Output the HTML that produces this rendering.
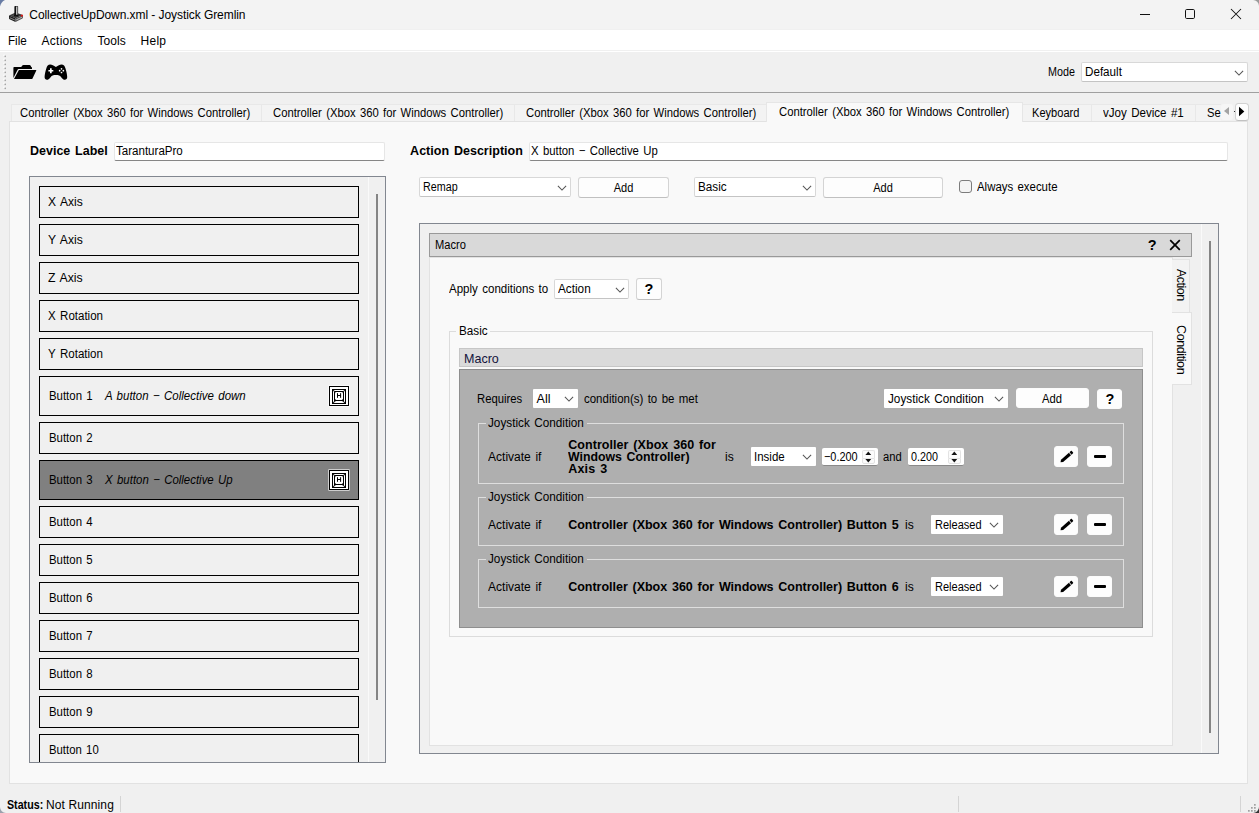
<!DOCTYPE html>
<html>
<head>
<meta charset="utf-8">
<title>Joystick Gremlin</title>
<style>
html,body{margin:0;padding:0;overflow:hidden;}
body{width:1259px;height:813px;overflow:hidden;position:relative;background:#f0f0f0;font-family:"Liberation Sans",sans-serif;font-size:12.5px;color:#000;}
.a{position:absolute;box-sizing:border-box;}
.t{position:absolute;white-space:nowrap;line-height:14px;height:14px;}
.b{font-weight:bold;}
.i{font-style:italic;}
.combo{position:absolute;box-sizing:border-box;background:#fff;border:1px solid #d8d8d8;border-bottom-color:#c4c4c4;border-radius:2px;}
.btn{position:absolute;box-sizing:border-box;background:#fdfdfd;border:1px solid #d4d4d4;border-bottom-color:#c0c0c0;border-radius:3px;}
.item{position:absolute;box-sizing:border-box;border:1px solid #000;background:#f0f0f0;}
.edit{position:absolute;box-sizing:border-box;background:#fff;border:1px solid #e6e6e6;border-bottom:1px solid #868686;border-radius:2px;}
</style>
</head>
<body>
<div class="a" style="left:0px;top:0px;width:1259px;height:30px;background:#f3f3f3;"></div>
<svg class="a" style="left:0;top:0" width="10" height="10" viewBox="0 0 10 10"><path d="M0 0 H5 Q1.2 1.6 0 6.6 Z" fill="#687ca4"/></svg>
<svg class="a" style="left:1249px;top:803px" width="10" height="10" viewBox="0 0 10 10"><path d="M10 10 V4 A6 6 0 0 1 4 10 Z" fill="#333"/></svg>
<svg class="a" style="left:0px;top:805px" width="8" height="8" viewBox="0 0 8 8"><path d="M0 8 V2 A6 6 0 0 0 6 8 Z" fill="#9aa0ac"/></svg>
<svg class="a" style="left:1251px;top:0" width="8" height="8" viewBox="0 0 8 8"><path d="M8 0 H2 A6 6 0 0 1 8 6 Z" fill="#9a9a9a"/></svg>
<svg class="a" style="left:8px;top:5px" width="16" height="18" viewBox="0 0 16 18">
<path d="M1 10.5 L7.5 7.6 L15 10 L7.5 13.3 Z" fill="#3a3a3a"/>
<path d="M1 10.5 L7.5 13.3 L7.5 16.9 L1.6 14.2 Q1 13.9 1 13.2 Z" fill="#1c1c1c"/>
<path d="M7.5 13.3 L15 10 L15 12.6 Q15 13.3 14.4 13.6 L7.5 16.9 Z" fill="#4e4e4e"/>
<path d="M1.8 12.2 L6.8 14.4 L6.8 15.4 L1.8 13.2 Z" fill="#8c8c8c"/>
<path d="M8.3 14.3 L14.3 11.6 L14.3 12.6 L8.3 15.4 Z" fill="#b4b4b4"/>
<path d="M3.5 10.6 L7.2 9 L11 10.4 L7.4 12.1 Z" fill="#555"/>
<ellipse cx="8.2" cy="10.4" rx="2.4" ry="1.2" fill="#111"/>
<rect x="6.4" y="0.9" width="3.7" height="9.8" rx="0.9" fill="#111"/>
<rect x="8.2" y="1.5" width="1.2" height="8.2" fill="#e6e6e6"/>
<rect x="12.8" y="9.7" width="2.1" height="1.7" rx="0.3" fill="#e31414"/>
</svg>
<div class="t " style="top:8.14px;letter-spacing:-0.065px;left:29.30px;font-size:12px;">CollectiveUpDown.xml - Joystick Gremlin</div>
<svg class="a" style="left:1130px;top:0" width="129" height="30" viewBox="0 0 129 30"><path d="M10 14.5 H20" stroke="#111" stroke-width="1" fill="none"/><rect x="55.5" y="9.5" width="9" height="9" rx="1.2" fill="none" stroke="#111" stroke-width="1"/><path d="M101 9 L111 19 M111 9 L101 19" stroke="#111" stroke-width="1.05" fill="none"/></svg>
<div class="a" style="left:0px;top:30px;width:1259px;height:20px;background:#fff;"></div>
<div class="a" style="left:0px;top:29px;width:1259px;height:1px;background:#f0f0f0;"></div>
<div class="t " style="top:34.14px;left:7.70px;transform:scaleX(0.9719);transform-origin:0 0;font-size:12px;">File</div>
<div class="t " style="top:34.14px;letter-spacing:0.237px;left:41.60px;font-size:12px;">Actions</div>
<div class="t " style="top:34.14px;letter-spacing:0.041px;left:97.50px;font-size:12px;">Tools</div>
<div class="t " style="top:34.14px;letter-spacing:0.289px;left:140.50px;font-size:12px;">Help</div>
<div class="a" style="left:0px;top:51px;width:1259px;height:42px;background:#f0f0f0;border-bottom:1px solid #a0a0a0;border-top:1px solid #fff;"></div>
<svg class="a" style="left:3px;top:54px" width="4" height="36" viewBox="0 0 4 36"><rect x="0.4" y="0.6" width="1.5" height="1.5" fill="#fff"/><rect x="1.5" y="1.6" width="1.5" height="1.5" fill="#a6a6a6"/><rect x="0.4" y="4.6" width="1.5" height="1.5" fill="#fff"/><rect x="1.5" y="5.6" width="1.5" height="1.5" fill="#a6a6a6"/><rect x="0.4" y="8.6" width="1.5" height="1.5" fill="#fff"/><rect x="1.5" y="9.6" width="1.5" height="1.5" fill="#a6a6a6"/><rect x="0.4" y="12.6" width="1.5" height="1.5" fill="#fff"/><rect x="1.5" y="13.6" width="1.5" height="1.5" fill="#a6a6a6"/><rect x="0.4" y="16.6" width="1.5" height="1.5" fill="#fff"/><rect x="1.5" y="17.6" width="1.5" height="1.5" fill="#a6a6a6"/><rect x="0.4" y="20.6" width="1.5" height="1.5" fill="#fff"/><rect x="1.5" y="21.6" width="1.5" height="1.5" fill="#a6a6a6"/><rect x="0.4" y="24.6" width="1.5" height="1.5" fill="#fff"/><rect x="1.5" y="25.6" width="1.5" height="1.5" fill="#a6a6a6"/><rect x="0.4" y="28.6" width="1.5" height="1.5" fill="#fff"/><rect x="1.5" y="29.6" width="1.5" height="1.5" fill="#a6a6a6"/><rect x="0.4" y="32.6" width="1.5" height="1.5" fill="#fff"/><rect x="1.5" y="33.6" width="1.5" height="1.5" fill="#a6a6a6"/></svg>
<svg class="a" style="left:13px;top:64px" width="24" height="16" viewBox="0 0 24 16">
<path d="M0.4 3.8 Q0.4 3.1 1.1 3.1 L8.2 3.1 L9.6 1.3 Q9.9 0.9 10.5 0.9 L16.6 0.9 Q17.2 0.9 17.5 1.4 L18.3 3.1 Q19 3.2 19 3.9 L19 5.1 L5.6 5.1 Q4.9 5.1 4.6 5.8 L0.4 14 Z" fill="#000"/>
<path d="M5.9 6 L23 6 Q23.6 6 23.3 6.6 L19.5 14.4 Q19.2 14.9 18.6 14.9 L1 14.9 Z" fill="#000"/>
</svg>
<svg class="a" style="left:44px;top:64px" width="24" height="16" viewBox="0 0 24 16">
<path d="M6.2 0.6 C8 0.6 9.6 1.8 11.9 3 C14.2 1.8 15.8 0.6 17.4 0.6 C19.7 0.6 20.8 2.2 21.5 4.6 C22.4 7.6 23.2 11 23.2 13 C23.2 14.8 22.2 15.8 20.9 15.8 C19.4 15.8 18.4 14.6 17 12.9 C16 11.6 14.6 11 11.9 11 C9.2 11 7.8 11.6 6.8 12.9 C5.4 14.6 4.4 15.8 2.9 15.8 C1.6 15.8 0.6 14.8 0.6 13 C0.6 11 1.4 7.6 2.3 4.6 C3 2.2 4.1 0.6 6.2 0.6 Z" fill="#000"/>
<path d="M6 4.3 h1.7 v1.6 h1.6 v1.7 h-1.6 v1.6 h-1.7 v-1.6 h-1.6 v-1.7 h1.6 Z" fill="#fff"/>
<circle cx="17.5" cy="4.8" r="0.85" fill="#fff"/><circle cx="17.5" cy="8.5" r="0.85" fill="#fff"/><circle cx="15.65" cy="6.65" r="0.85" fill="#fff"/><circle cx="19.35" cy="6.65" r="0.85" fill="#fff"/>
</svg>
<div class="t " style="top:64.97px;left:1047.90px;transform:scaleX(0.8599);transform-origin:0 0;">Mode</div>
<div class="combo" style="left:1081px;top:62px;width:167px;height:20px;"></div>
<div class="t " style="top:64.97px;left:1084.90px;transform:scaleX(0.9316);transform-origin:0 0;">Default</div>
<svg class="a" style="left:1233.5px;top:69.8px" width="10" height="6" viewBox="0 0 10 6"><path d="M0.9 0.8 L5 5 L9.1 0.8" fill="none" stroke="#555" stroke-width="1.05"/></svg>
<div class="a" style="left:9px;top:121px;width:1239px;height:663px;background:#f9f9f9;border:1px solid #e2e2e2;"></div>
<div class="a" style="left:11px;top:104px;width:251px;height:17px;background:#f3f3f3;border:1px solid #e8e8e8;border-bottom:none;border-left:none;"></div>
<div class="a" style="left:262px;top:104px;width:253px;height:17px;background:#f3f3f3;border:1px solid #e8e8e8;border-bottom:none;border-left:none;"></div>
<div class="a" style="left:515px;top:104px;width:253px;height:17px;background:#f3f3f3;border:1px solid #e8e8e8;border-bottom:none;border-left:none;"></div>
<div class="a" style="left:1023px;top:104px;width:69px;height:17px;background:#f3f3f3;border:1px solid #e8e8e8;border-bottom:none;border-left:none;"></div>
<div class="a" style="left:1092px;top:104px;width:104px;height:17px;background:#f3f3f3;border:1px solid #e8e8e8;border-bottom:none;border-left:none;"></div>
<div class="a" style="left:1196px;top:104px;width:54px;height:17px;background:#f3f3f3;border:1px solid #e8e8e8;border-bottom:none;border-left:none;"></div>
<div class="a" style="left:11px;top:104px;width:1px;height:17px;background:#e8e8e8;"></div>
<div class="a" style="left:766px;top:102px;width:257px;height:20px;background:#f9f9f9;border:1px solid #e6e6e6;border-bottom:none;"></div>
<div class="t " style="top:105.97px;word-spacing:1.3px;left:19.60px;transform:scaleX(0.9020);transform-origin:0 0;">Controller (Xbox 360 for Windows Controller)</div>
<div class="t " style="top:105.97px;word-spacing:1.3px;left:272.60px;transform:scaleX(0.9020);transform-origin:0 0;">Controller (Xbox 360 for Windows Controller)</div>
<div class="t " style="top:105.97px;word-spacing:1.3px;left:525.60px;transform:scaleX(0.9020);transform-origin:0 0;">Controller (Xbox 360 for Windows Controller)</div>
<div class="t " style="top:104.97px;word-spacing:1.3px;left:778.60px;transform:scaleX(0.9020);transform-origin:0 0;">Controller (Xbox 360 for Windows Controller)</div>
<div class="t " style="top:105.97px;left:1032.30px;transform:scaleX(0.8857);transform-origin:0 0;">Keyboard</div>
<div class="t " style="top:105.97px;word-spacing:1.3px;left:1103.10px;transform:scaleX(0.9248);transform-origin:0 0;">vJoy Device #1</div>
<div class="t " style="top:105.97px;left:1206.80px;transform:scaleX(0.8956);transform-origin:0 0;">Se</div>
<div class="a" style="left:1221px;top:102px;width:30px;height:19px;background:#f0f0f0;"></div>
<div class="a" style="left:1221px;top:104px;width:12px;height:16px;background:#f6f6f6;border-radius:3px;"></div>
<svg class="a" style="left:1223px;top:106px" width="8" height="10" viewBox="0 0 8 10"><path d="M6 1 L1 5 L6 9 Z" fill="#a3a3a3"/></svg>
<div class="a" style="left:1234px;top:111px;width:1px;height:1px;background:#333;"></div>
<div class="a" style="left:1235px;top:103px;width:14px;height:18px;background:#fdfdfd;border:1px solid #d2d2d2;border-bottom-color:#c2c2c2;border-radius:3.5px;"></div>
<svg class="a" style="left:1238px;top:106px" width="8" height="11" viewBox="0 0 8 11"><path d="M1 0.8 L6.3 5.5 L1 10.2 Z" fill="#000"/></svg>
<div class="t b" style="top:143.97px;word-spacing:1.3px;left:30.00px;">Device Label</div>
<div class="edit" style="left:114px;top:142px;width:271px;height:19px;"></div>
<div class="t " style="top:143.97px;left:116.00px;transform:scaleX(0.9244);transform-origin:0 0;">TaranturaPro</div>
<div class="a" style="left:29px;top:176px;width:357px;height:587px;background:#f0f0f0;border:1px solid #828790;"></div>
<div class="a" style="left:368px;top:177px;width:1px;height:585px;background:#fafafa;"></div>
<div class="a" style="left:376px;top:194px;width:2px;height:506px;background:#858585;"></div>
<div class="item" style="left:39px;top:186px;width:320px;height:32px;"></div>
<div class="t " style="top:194.97px;word-spacing:1.3px;left:47.90px;transform:scaleX(0.9639);transform-origin:0 0;">X Axis</div>
<div class="item" style="left:39px;top:224px;width:320px;height:32px;"></div>
<div class="t " style="top:232.97px;word-spacing:1.3px;left:47.90px;transform:scaleX(0.9702);transform-origin:0 0;">Y Axis</div>
<div class="item" style="left:39px;top:262px;width:320px;height:32px;"></div>
<div class="t " style="top:270.97px;word-spacing:1.3px;left:47.90px;transform:scaleX(0.9831);transform-origin:0 0;">Z Axis</div>
<div class="item" style="left:39px;top:300px;width:320px;height:32px;"></div>
<div class="t " style="top:308.97px;word-spacing:1.3px;left:47.90px;transform:scaleX(0.9217);transform-origin:0 0;">X Rotation</div>
<div class="item" style="left:39px;top:338px;width:320px;height:32px;"></div>
<div class="t " style="top:346.97px;word-spacing:1.3px;left:47.90px;transform:scaleX(0.9250);transform-origin:0 0;">Y Rotation</div>
<div class="item" style="left:39px;top:376px;width:320px;height:40px;"></div>
<div class="t " style="top:388.97px;word-spacing:1.3px;left:48.50px;transform:scaleX(0.9127);transform-origin:0 0;">Button 1</div>
<div class="t i" style="top:388.97px;word-spacing:1.3px;left:104.70px;transform:scaleX(0.9191);transform-origin:0 0;">A button &#8722; Collective down</div>
<svg class="a" style="left:328px;top:385px" width="22" height="22" viewBox="0 0 22 22">
<rect x="0.4" y="0.4" width="21.2" height="21.2" fill="#fff"/>
<rect x="1" y="1" width="20" height="20" fill="#000"/>
<rect x="2" y="2" width="18" height="18" fill="#fff"/>
<rect x="4" y="4" width="14" height="15" fill="#000"/>
<rect x="5.5" y="5.5" width="11" height="12" rx="1.3" fill="none" stroke="#fff" stroke-width="1"/>
<rect x="7" y="7" width="8" height="8" rx="1.4" fill="#fff"/>
<path d="M6.6 17.5 L7.6 16 L14.4 16 L15.4 17.5 Z" fill="#fff"/>
<path d="M9.5 8.2 V12.8 M12.6 8.2 V12.8 M9.5 10.5 H12.6" stroke="#000" stroke-width="1" fill="none"/>
</svg>
<div class="item" style="left:39px;top:422px;width:320px;height:32px;"></div>
<div class="t " style="top:430.97px;word-spacing:1.3px;left:48.50px;transform:scaleX(0.9127);transform-origin:0 0;">Button 2</div>
<div class="item" style="left:39px;top:460px;width:320px;height:40px;background:#808080;"></div>
<div class="t " style="top:472.97px;word-spacing:1.3px;left:48.50px;transform:scaleX(0.9127);transform-origin:0 0;">Button 3</div>
<div class="t i" style="top:472.97px;word-spacing:1.3px;left:104.70px;transform:scaleX(0.9144);transform-origin:0 0;">X button &#8722; Collective Up</div>
<svg class="a" style="left:328px;top:469px" width="22" height="22" viewBox="0 0 22 22">
<rect x="0.4" y="0.4" width="21.2" height="21.2" fill="#fff"/>
<rect x="1" y="1" width="20" height="20" fill="#000"/>
<rect x="2" y="2" width="18" height="18" fill="#fff"/>
<rect x="4" y="4" width="14" height="15" fill="#000"/>
<rect x="5.5" y="5.5" width="11" height="12" rx="1.3" fill="none" stroke="#fff" stroke-width="1"/>
<rect x="7" y="7" width="8" height="8" rx="1.4" fill="#fff"/>
<path d="M6.6 17.5 L7.6 16 L14.4 16 L15.4 17.5 Z" fill="#fff"/>
<path d="M9.5 8.2 V12.8 M12.6 8.2 V12.8 M9.5 10.5 H12.6" stroke="#000" stroke-width="1" fill="none"/>
</svg>
<div class="item" style="left:39px;top:506px;width:320px;height:32px;"></div>
<div class="t " style="top:514.97px;word-spacing:1.3px;left:48.50px;transform:scaleX(0.9127);transform-origin:0 0;">Button 4</div>
<div class="item" style="left:39px;top:544px;width:320px;height:32px;"></div>
<div class="t " style="top:552.97px;word-spacing:1.3px;left:48.50px;transform:scaleX(0.9127);transform-origin:0 0;">Button 5</div>
<div class="item" style="left:39px;top:582px;width:320px;height:32px;"></div>
<div class="t " style="top:590.97px;word-spacing:1.3px;left:48.50px;transform:scaleX(0.9127);transform-origin:0 0;">Button 6</div>
<div class="item" style="left:39px;top:620px;width:320px;height:32px;"></div>
<div class="t " style="top:628.97px;word-spacing:1.3px;left:48.50px;transform:scaleX(0.9127);transform-origin:0 0;">Button 7</div>
<div class="item" style="left:39px;top:658px;width:320px;height:32px;"></div>
<div class="t " style="top:666.97px;word-spacing:1.3px;left:48.50px;transform:scaleX(0.9127);transform-origin:0 0;">Button 8</div>
<div class="item" style="left:39px;top:696px;width:320px;height:32px;"></div>
<div class="t " style="top:704.97px;word-spacing:1.3px;left:48.50px;transform:scaleX(0.9127);transform-origin:0 0;">Button 9</div>
<div class="item" style="left:39px;top:734px;width:320px;height:28px;border-bottom:none;"></div>
<div class="t " style="top:742.97px;word-spacing:1.3px;left:48.50px;transform:scaleX(0.9067);transform-origin:0 0;">Button 10</div>
<div class="t b" style="top:143.97px;letter-spacing:0.021px;word-spacing:1.3px;left:410.10px;">Action Description</div>
<div class="edit" style="left:529px;top:142px;width:699px;height:19px;"></div>
<div class="t " style="top:143.97px;word-spacing:1.3px;left:531.00px;transform:scaleX(0.9072);transform-origin:0 0;">X button &#8722; Collective Up</div>
<div class="combo" style="left:419px;top:177px;width:152px;height:20px;"></div>
<div class="t " style="top:179.97px;left:423.20px;transform:scaleX(0.8586);transform-origin:0 0;">Remap</div>
<svg class="a" style="left:556.5px;top:184.8px" width="10" height="6" viewBox="0 0 10 6"><path d="M0.9 0.8 L5 5 L9.1 0.8" fill="none" stroke="#555" stroke-width="1.05"/></svg>
<div class="btn" style="left:578px;top:177px;width:91px;height:21px;"></div>
<div class="t " style="top:180.97px;left:578px;width:91px;text-align:center;transform:scaleX(0.8809);transform-origin:50% 0;">Add</div>
<div class="combo" style="left:694px;top:177px;width:122px;height:20px;"></div>
<div class="t " style="top:179.97px;left:698.20px;transform:scaleX(0.9386);transform-origin:0 0;">Basic</div>
<svg class="a" style="left:801.5px;top:184.8px" width="10" height="6" viewBox="0 0 10 6"><path d="M0.9 0.8 L5 5 L9.1 0.8" fill="none" stroke="#555" stroke-width="1.05"/></svg>
<div class="btn" style="left:823px;top:177px;width:120px;height:21px;"></div>
<div class="t " style="top:180.97px;left:823px;width:120px;text-align:center;transform:scaleX(0.8809);transform-origin:50% 0;">Add</div>
<div class="a" style="left:959px;top:180px;width:13px;height:13px;background:#f4f4f4;border:1px solid #7c7c7c;border-radius:3px;"></div>
<div class="t " style="top:179.97px;word-spacing:1.3px;left:977.20px;transform:scaleX(0.9131);transform-origin:0 0;">Always execute</div>
<div class="a" style="left:419px;top:223px;width:800px;height:531px;background:#f0f0f0;border:1px solid #828790;"></div>
<div class="a" style="left:1201px;top:224px;width:1px;height:529px;background:#fafafa;"></div>
<div class="a" style="left:1209px;top:241px;width:2px;height:492px;background:#858585;"></div>
<div class="a" style="left:429px;top:233px;width:763px;height:24px;background:#d9d9d9;border:1px solid #999;"></div>
<div class="t " style="top:237.97px;left:435.00px;transform:scaleX(0.8896);transform-origin:0 0;">Macro</div>
<div class="t b" style="top:238.28px;left:1147.70px;font-size:14.5px;">?</div>
<svg class="a" style="left:1169px;top:239px" width="12" height="12" viewBox="0 0 12 12"><path d="M1.2 1.2 L10.8 10.8 M10.8 1.2 L1.2 10.8" stroke="#000" stroke-width="1.7" fill="none"/></svg>
<div class="a" style="left:429px;top:257px;width:744px;height:489px;background:#f9f9f9;border:1px solid #e2e2e2;"></div>
<div class="a" style="left:1172px;top:259px;width:18px;height:54px;background:#f3f3f3;border:1px solid #e2e2e2;border-left:none;"></div>
<div class="a" style="left:1172px;top:312px;width:20px;height:73px;background:#f9f9f9;border:1px solid #e2e2e2;border-left:none;"></div>
<div class="t" style="left:1181px;top:269.4px;transform-origin:0 0;transform:rotate(90deg) translateY(-7px);letter-spacing:-0.5px;">Action</div>
<div class="t" style="left:1181px;top:325.4px;transform-origin:0 0;transform:rotate(90deg) translateY(-7px);letter-spacing:-0.4px;">Condition</div>
<div class="t " style="top:281.97px;word-spacing:1.3px;left:448.60px;transform:scaleX(0.9225);transform-origin:0 0;">Apply conditions to</div>
<div class="combo" style="left:554px;top:279px;width:75px;height:20px;"></div>
<div class="t " style="top:281.97px;left:558.20px;transform:scaleX(0.9410);transform-origin:0 0;">Action</div>
<svg class="a" style="left:614.5px;top:286.8px" width="10" height="6" viewBox="0 0 10 6"><path d="M0.9 0.8 L5 5 L9.1 0.8" fill="none" stroke="#555" stroke-width="1.05"/></svg>
<div class="btn" style="left:636px;top:278px;width:26px;height:22px;"></div>
<div class="t b" style="top:282.28px;letter-spacing:-0.300px;left:636px;width:26px;text-align:center;text-indent:-0.300px;font-size:14.5px;">?</div>
<div class="a" style="left:449px;top:331px;width:704px;height:306px;border:1px solid #dcdcdc;"></div>
<div class="a" style="left:456px;top:324px;width:34px;height:14px;background:#f9f9f9;"></div>
<div class="t " style="top:323.97px;left:458.90px;transform:scaleX(0.9353);transform-origin:0 0;">Basic</div>
<div class="a" style="left:459px;top:348px;width:684px;height:19px;background:#dadada;border:1px solid #c6c6c6;"></div>
<div class="t " style="top:351.80px;left:463.60px;transform:scaleX(0.9633);transform-origin:0 0;font-size:13px;color:#14143c;">Macro</div>
<div class="a" style="left:459px;top:369px;width:684px;height:259px;background:#afafaf;border:1px solid #8e8e8e;"></div>
<div class="t " style="top:391.97px;left:477.30px;transform:scaleX(0.9034);transform-origin:0 0;">Requires</div>
<div class="combo" style="left:533px;top:389px;width:45px;height:19px;border:none;border-radius:1px;"></div>
<div class="t " style="top:391.97px;letter-spacing:0.117px;left:536.50px;">All</div>
<svg class="a" style="left:563.5px;top:396.3px" width="10" height="6" viewBox="0 0 10 6"><path d="M0.9 0.8 L5 5 L9.1 0.8" fill="none" stroke="#555" stroke-width="1.05"/></svg>
<div class="t " style="top:391.97px;word-spacing:1.3px;left:583.90px;transform:scaleX(0.9178);transform-origin:0 0;">condition(s) to be met</div>
<div class="combo" style="left:884px;top:389px;width:124px;height:19px;border:none;border-radius:1px;"></div>
<div class="t " style="top:391.97px;word-spacing:1.3px;left:887.50px;transform:scaleX(0.9397);transform-origin:0 0;">Joystick Condition</div>
<svg class="a" style="left:993.5px;top:396.3px" width="10" height="6" viewBox="0 0 10 6"><path d="M0.9 0.8 L5 5 L9.1 0.8" fill="none" stroke="#555" stroke-width="1.05"/></svg>
<div class="btn" style="left:1016.4px;top:388.3px;width:72.2px;height:20px;border-color:#fbfbfb;"></div>
<div class="t " style="top:391.97px;left:1016.4px;width:72.2px;text-align:center;transform:scaleX(0.8989);transform-origin:50% 0;">Add</div>
<div class="btn" style="left:1097.3px;top:388.5px;width:25.2px;height:20.5px;border-color:#fbfbfb;"></div>
<div class="t b" style="top:392.28px;letter-spacing:-0.300px;left:1097.3px;width:25.2px;text-align:center;text-indent:-0.300px;font-size:14.5px;">?</div>
<div class="a" style="left:478px;top:423px;width:646px;height:61px;border:1px solid #dedede;"></div>
<div class="a" style="left:485.5px;top:416px;width:101px;height:14px;background:#afafaf;"></div>
<div class="t " style="top:415.97px;word-spacing:1.3px;left:488.10px;transform:scaleX(0.9397);transform-origin:0 0;">Joystick Condition</div>
<div class="t " style="top:449.97px;word-spacing:1.3px;left:488.10px;transform:scaleX(0.9624);transform-origin:0 0;">Activate if</div>
<div class="t b" style="top:437.97px;letter-spacing:0.060px;word-spacing:1.3px;left:568.20px;">Controller (Xbox 360 for</div>
<div class="t b" style="top:449.97px;word-spacing:1.3px;left:568.20px;transform:scaleX(0.9845);transform-origin:0 0;">Windows Controller)</div>
<div class="t b" style="top:461.97px;letter-spacing:0.192px;word-spacing:1.3px;left:568.20px;">Axis 3</div>
<div class="t " style="top:449.97px;left:724.80px;transform:scaleX(0.9633);transform-origin:0 0;">is</div>
<div class="combo" style="left:751px;top:447px;width:65px;height:19px;border:none;border-radius:1px;"></div>
<div class="t " style="top:449.97px;left:753.80px;transform:scaleX(0.9203);transform-origin:0 0;">Inside</div>
<svg class="a" style="left:801.5px;top:454.3px" width="10" height="6" viewBox="0 0 10 6"><path d="M0.9 0.8 L5 5 L9.1 0.8" fill="none" stroke="#555" stroke-width="1.05"/></svg>
<div class="a" style="left:822px;top:448px;width:55.6px;height:18px;background:#fff;border-bottom:1px solid #8a8a8a;border-radius:2px;"></div>
<div class="t " style="top:449.97px;left:824.30px;transform:scaleX(0.8732);transform-origin:0 0;">&#8722;0.200</div>
<div class="a" style="left:862.1px;top:449.5px;width:12.5px;height:8.3px;background:#fbfbfb;border:1px solid #e3e3e3;border-bottom:none;border-radius:2px 2px 0 0;"></div>
<div class="a" style="left:862.1px;top:457.8px;width:12.5px;height:6px;background:#fbfbfb;border:1px solid #e3e3e3;border-radius:0 0 2px 2px;"></div>
<svg class="a" style="left:862.1px;top:448px" width="13" height="17" viewBox="0 0 13 17"><path d="M3.4 7.1 L6.3 3.6 L9.2 7.1 Z" fill="#111"/><path d="M3.4 11 L6.3 14.4 L9.2 11 Z" fill="#111"/></svg>
<div class="t " style="top:449.97px;left:883.10px;transform:scaleX(0.8965);transform-origin:0 0;">and</div>
<div class="a" style="left:908.2px;top:448px;width:55.4px;height:18px;background:#fff;border-bottom:1px solid #8a8a8a;border-radius:2px;"></div>
<div class="t " style="top:449.97px;left:910.50px;transform:scaleX(0.8599);transform-origin:0 0;">0.200</div>
<div class="a" style="left:948.1px;top:449.5px;width:12.5px;height:8.3px;background:#fbfbfb;border:1px solid #e3e3e3;border-bottom:none;border-radius:2px 2px 0 0;"></div>
<div class="a" style="left:948.1px;top:457.8px;width:12.5px;height:6px;background:#fbfbfb;border:1px solid #e3e3e3;border-radius:0 0 2px 2px;"></div>
<svg class="a" style="left:948.1px;top:448px" width="13" height="17" viewBox="0 0 13 17"><path d="M3.4 7.1 L6.3 3.6 L9.2 7.1 Z" fill="#111"/><path d="M3.4 11 L6.3 14.4 L9.2 11 Z" fill="#111"/></svg>
<div class="btn" style="left:1054px;top:446px;width:24px;height:21px;border-color:#fbfbfb;"></div>
<svg class="a" style="left:1053.5px;top:446.4px" width="25" height="21" viewBox="0 0 25 21"><path d="M6.5 16.3 L7 13.7 L14.9 6.8 L17 9.2 L9.1 16 Z" fill="#000"/><path d="M15.5 6.3 L17.15 4.85 Q17.5 4.6 17.85 4.95 L19.1 6.4 Q19.4 6.8 19.05 7.15 L17.55 8.7 Z" fill="#000"/></svg>
<div class="btn" style="left:1087px;top:446px;width:25px;height:21px;border-color:#fbfbfb;"></div>
<div class="a" style="left:1093.8999999999999px;top:455.0px;width:12.4px;height:2.8px;background:#000;border-radius:1px;"></div>
<div class="a" style="left:478px;top:497px;width:646px;height:49px;border:1px solid #dedede;"></div>
<div class="a" style="left:485.5px;top:490px;width:101px;height:14px;background:#afafaf;"></div>
<div class="t " style="top:489.97px;word-spacing:1.3px;left:488.10px;transform:scaleX(0.9397);transform-origin:0 0;">Joystick Condition</div>
<div class="t " style="top:517.97px;word-spacing:1.3px;left:488.10px;transform:scaleX(0.9624);transform-origin:0 0;">Activate if</div>
<div class="t b" style="top:517.97px;letter-spacing:-0.014px;word-spacing:1.3px;left:568.20px;">Controller (Xbox 360 for Windows Controller) Button 5</div>
<div class="t " style="top:517.97px;left:905.10px;transform:scaleX(0.9633);transform-origin:0 0;">is</div>
<div class="combo" style="left:931px;top:515px;width:72px;height:19px;border:none;border-radius:1px;"></div>
<div class="t " style="top:517.97px;left:934.90px;transform:scaleX(0.8821);transform-origin:0 0;">Released</div>
<svg class="a" style="left:988.5px;top:522.3px" width="10" height="6" viewBox="0 0 10 6"><path d="M0.9 0.8 L5 5 L9.1 0.8" fill="none" stroke="#555" stroke-width="1.05"/></svg>
<div class="btn" style="left:1054px;top:514px;width:24px;height:21px;border-color:#fbfbfb;"></div>
<svg class="a" style="left:1053.5px;top:514.4px" width="25" height="21" viewBox="0 0 25 21"><path d="M6.5 16.3 L7 13.7 L14.9 6.8 L17 9.2 L9.1 16 Z" fill="#000"/><path d="M15.5 6.3 L17.15 4.85 Q17.5 4.6 17.85 4.95 L19.1 6.4 Q19.4 6.8 19.05 7.15 L17.55 8.7 Z" fill="#000"/></svg>
<div class="btn" style="left:1087px;top:514px;width:25px;height:21px;border-color:#fbfbfb;"></div>
<div class="a" style="left:1093.8999999999999px;top:523.0px;width:12.4px;height:2.8px;background:#000;border-radius:1px;"></div>
<div class="a" style="left:478px;top:559px;width:646px;height:49px;border:1px solid #dedede;"></div>
<div class="a" style="left:485.5px;top:552px;width:101px;height:14px;background:#afafaf;"></div>
<div class="t " style="top:551.97px;word-spacing:1.3px;left:488.10px;transform:scaleX(0.9397);transform-origin:0 0;">Joystick Condition</div>
<div class="t " style="top:579.97px;word-spacing:1.3px;left:488.10px;transform:scaleX(0.9624);transform-origin:0 0;">Activate if</div>
<div class="t b" style="top:579.97px;letter-spacing:-0.014px;word-spacing:1.3px;left:568.20px;">Controller (Xbox 360 for Windows Controller) Button 6</div>
<div class="t " style="top:579.97px;left:905.10px;transform:scaleX(0.9633);transform-origin:0 0;">is</div>
<div class="combo" style="left:931px;top:577px;width:72px;height:19px;border:none;border-radius:1px;"></div>
<div class="t " style="top:579.97px;left:934.90px;transform:scaleX(0.8821);transform-origin:0 0;">Released</div>
<svg class="a" style="left:988.5px;top:584.3px" width="10" height="6" viewBox="0 0 10 6"><path d="M0.9 0.8 L5 5 L9.1 0.8" fill="none" stroke="#555" stroke-width="1.05"/></svg>
<div class="btn" style="left:1054px;top:576px;width:24px;height:21px;border-color:#fbfbfb;"></div>
<svg class="a" style="left:1053.5px;top:576.4px" width="25" height="21" viewBox="0 0 25 21"><path d="M6.5 16.3 L7 13.7 L14.9 6.8 L17 9.2 L9.1 16 Z" fill="#000"/><path d="M15.5 6.3 L17.15 4.85 Q17.5 4.6 17.85 4.95 L19.1 6.4 Q19.4 6.8 19.05 7.15 L17.55 8.7 Z" fill="#000"/></svg>
<div class="btn" style="left:1087px;top:576px;width:25px;height:21px;border-color:#fbfbfb;"></div>
<div class="a" style="left:1093.8999999999999px;top:585.0px;width:12.4px;height:2.8px;background:#000;border-radius:1px;"></div>
<div class="t b" style="top:798.14px;left:6.60px;transform:scaleX(0.8900);transform-origin:0 0;font-size:12px;">Status:</div>
<div class="t " style="top:798.14px;letter-spacing:0.122px;left:45.90px;font-size:12px;">Not Running</div>
<div class="a" style="left:120px;top:796px;width:1px;height:16px;background:#d4d4d4;"></div>
<div class="a" style="left:958px;top:796px;width:1px;height:16px;background:#d4d4d4;"></div>
<div class="a" style="left:1240px;top:796px;width:1px;height:16px;background:#d4d4d4;"></div>
<svg class="a" style="left:1247px;top:803px" width="11" height="11" viewBox="0 0 11 11"><rect x="7" y="1" width="1.7" height="1.7" fill="#a0a0a0"/><rect x="4" y="4" width="1.7" height="1.7" fill="#a0a0a0"/><rect x="7" y="4" width="1.7" height="1.7" fill="#a0a0a0"/><rect x="1" y="7" width="1.7" height="1.7" fill="#a0a0a0"/><rect x="4" y="7" width="1.7" height="1.7" fill="#a0a0a0"/><rect x="7" y="7" width="1.7" height="1.7" fill="#a0a0a0"/></svg>
</body>
</html>
